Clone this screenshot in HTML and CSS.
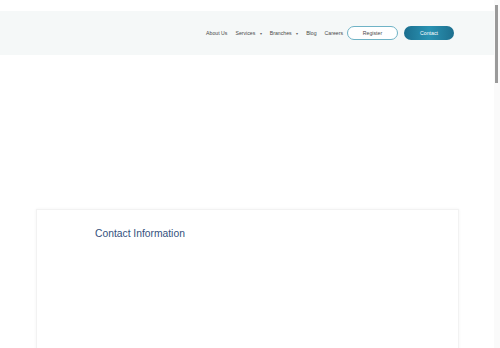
FILE: index.html
```html
<!DOCTYPE html>
<html>
    <head>
        <title>Contact</title>
        <link rel="stylesheet" href="styles.css">
    </head>
    <body>
        <header class="header">
            <nav class="nav">
                <a class="nav-link">About Us</a>
                <a class="nav-link">Services <span class="caret">&#9662;</span></a>
                <a class="nav-link">Branches <span class="caret">&#9662;</span></a>
                <a class="nav-link">Blog</a>
                <a class="nav-link">Careers</a>
                <button class="register-button">Register</button>
                <button class="contact-button">Contact</button>
            </nav>
        </header>

        <main class="main">
            <section class="card">
                <p class="card-title">Contact Information</p>
            </section>
        </main>

        <div class="scrollbar">
            <div class="scrollbar-thumb"></div>
        </div>
    </body>
</html>
```

FILE: styles.css
```css
body{
    margin:0;
    font-family:"Liberation Sans", Arial, sans-serif;
    background-color:white;
}

.header{
    margin-top:11px;
    height:44px;
    background-color:#f5f8f8;
    display:flex;
    align-items:center;
    justify-content:flex-end;
    padding-right:46px;
}

.nav{
    display:flex;
    align-items:center;
    gap:8px;
}

.nav-link{
    font-size:5.2px;
    color:#4a4a4a;
    cursor:pointer;
}

.caret{
    font-size:4px;
    margin-left:3px;
    color:#666;
}

.register-button{
    width:51px;
    height:14px;
    border:1px solid #6fb3c6;
    border-radius:10px;
    background-color:white;
    font-family:inherit;
    font-size:5.2px;
    color:#4a4a4a;
    padding:0;
    margin-left:-4px;
}

.contact-button{
    width:50px;
    height:14px;
    border:none;
    border-radius:10px;
    background:linear-gradient(to right, #1b6e8e, #2a93b3 50%, #1d6f8e);
    font-family:inherit;
    font-size:5.2px;
    color:white;
    padding:0;
    margin-left:-2px;
}

.main{
    padding-top:154px;
    height:1400px;
}

.card{
    width:423px;
    height:1300px;
    margin-left:36px;
    border:1px solid #f2f2f2;
    box-shadow:0 0 3px rgba(0,0,0,0.05);
    padding:18px 0 0 58px;
    box-sizing:border-box;
}

.card-title{
    margin:0;
    font-size:10.3px;
    color:#34517d;
}

.scrollbar{
    position:fixed;
    top:0;
    right:0;
    width:6px;
    height:348px;
    background-color:#fafafa;
}

.scrollbar-thumb{
    margin:5px 0 0 1px;
    width:3px;
    height:78px;
    background-color:#9a9a9a;
}
```
